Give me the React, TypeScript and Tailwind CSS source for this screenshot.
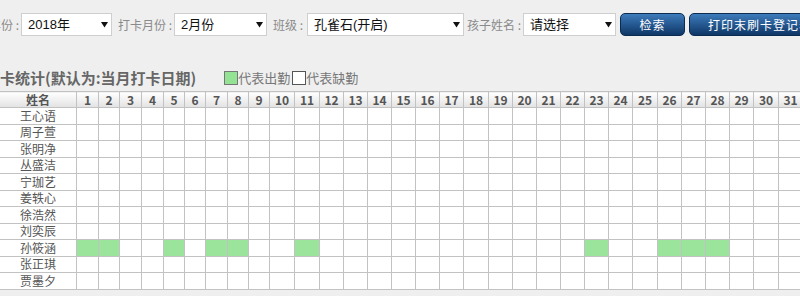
import React from "react";

const names = ["王心语", "周子萱", "张明净", "丛盛洁", "宁珈艺", "姜轶心", "徐浩然", "刘奕辰", "孙筱涵", "张正琪", "贾墨夕"];
const widths = [22, 21, 22, 22, 21, 21, 22, 21, 21, 25, 25, 24, 24, 24, 24, 24, 24, 25, 24, 24, 24, 24, 24, 24, 25, 24, 24, 24, 24, 25, 24];
const present: Record<number, number[]> = { 8: [1, 2, 5, 7, 8, 11, 23, 26, 27, 28] };
const days = Array.from({ length: 31 }, (_, i) => i + 1);

const font = { fontFamily: '"Noto Sans CJK SC", sans-serif' };

function Arrow() {
  return (
    <svg width="7" height="7" viewBox="0 0 7 7" className="shrink-0">
      <path d="M0 1 L7 1 L3.5 6.5 Z" fill="#111" />
    </svg>
  );
}

function Select({ w, text }: { w: string; text: string }) {
  return (
    <div className={`${w} h-[23px] shrink-0 border border-[#cfcfcf] bg-white flex items-center justify-between pl-[6px] pr-[3px] text-[13px] text-[#111] font-['Liberation_Sans','Noto_Sans_CJK_SC',sans-serif]`}>
      <span>{text}</span>
      <Arrow />
    </div>
  );
}

function Label({ text, cls }: { text: string; cls: string }) {
  return <span className={`${cls} shrink-0 text-[12px] text-[#8a8a8a] whitespace-nowrap font-['Noto_Sans_CJK_SC',sans-serif]`}>{text}</span>;
}

export default function App() {
  return (
    <div className="w-[800px] h-[296px] overflow-hidden bg-[#efefef]" style={font}>
      <div className="flex items-center h-[23px] mt-[13px] -ml-[11px] whitespace-nowrap">
        <Label text="年份 :" cls="w-[32px]" />
        <Select w="w-[91px]" text="2018年" />
        <Label text="打卡月份 :" cls="w-[56px] ml-[6px]" />
        <Select w="w-[93px]" text="2月份" />
        <Label text="班级 :" cls="w-[34px] ml-[6px]" />
        <Select w="w-[157px]" text="孔雀石(开启)" />
        <Label text="孩子姓名 :" cls="w-[56px] ml-[3px]" />
        <Select w="w-[93px]" text="请选择" />
        <button className="ml-[4px] w-[65px] h-[23px] shrink-0 rounded-[5px] border border-[#0c2b50] bg-gradient-to-b from-[#3d7cbc] to-[#0f3767] text-white text-[12px] tracking-[1px] flex items-center justify-center">
          检索
        </button>
        <button className="ml-[4px] w-[150px] h-[23px] shrink-0 rounded-[5px] border border-[#0c2b50] bg-gradient-to-b from-[#3d7cbc] to-[#0f3767] text-white text-[12px] tracking-[1px] flex items-center justify-start pl-[18px]">
          打印末刷卡登记表
        </button>
      </div>

      <div className="flex items-center h-[20px] mt-[32px] -ml-[15px] whitespace-nowrap">
        <span className="text-[15px] font-bold text-[#666]">打卡统计(默认为:当月打卡日期)</span>
        <span className="ml-[28px] w-[14px] h-[14px] border border-[#777] bg-[#94e294]" />
        <span className="text-[13px] text-[#777]">代表出勤</span>
        <span className="ml-[2px] w-[14px] h-[14px] border border-[#555] bg-white" />
        <span className="text-[13px] text-[#777]">代表缺勤</span>
      </div>

      <table className="mt-[3px] -ml-px table-fixed border-collapse bg-white" style={{ width: 77 + widths.reduce((a, b) => a + b, 0) }}>
        <colgroup>
          <col style={{ width: 77 }} />
          {widths.map((w, i) => (
            <col key={i} style={{ width: w }} />
          ))}
        </colgroup>
        <thead>
          <tr className="h-[16px]">
            <th className="border border-[#c2c2c2] bg-gradient-to-b from-white to-[#e2e2e2] p-0 text-[12px] leading-[14px] font-semibold text-[#555]">姓名</th>
            {days.map((d) => (
              <th key={d} className="border border-[#c2c2c2] bg-gradient-to-b from-white to-[#e2e2e2] p-0 text-[12px] leading-[14px] font-semibold text-[#555]">
                {d}
              </th>
            ))}
          </tr>
        </thead>
        <tbody>
          {names.map((n, r) => (
            <tr key={n} className="h-[16.5px]">
              <td className="border border-[#c2c2c2] p-0 text-center text-[12px] leading-[14px] text-[#555]">{n}</td>
              {days.map((d) => (
                <td key={d} className={`border border-[#c2c2c2] p-0 ${present[r]?.includes(d) ? "bg-[#9be49b]" : "bg-white"}`} />
              ))}
            </tr>
          ))}
        </tbody>
      </table>
    </div>
  );
}
